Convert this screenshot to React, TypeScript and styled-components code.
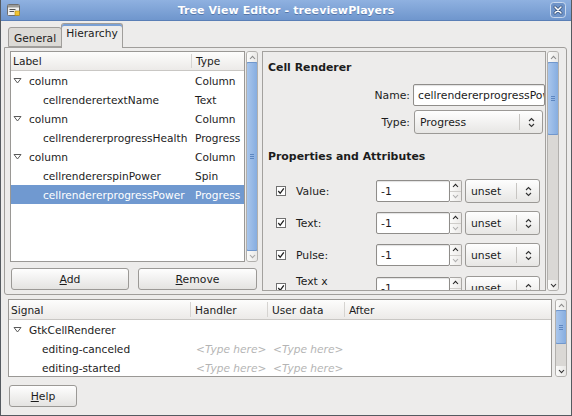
import React from 'react';
import styled, { createGlobalStyle } from 'styled-components';

const GlobalStyle = createGlobalStyle`
	html, body {
		margin: 0;
		padding: 0;
		background: #edeceb;
	}
	body {
		font-family: "DejaVu Sans", "Liberation Sans", sans-serif;
		font-size: 10.6px;
		color: #1c1c1c;
	}
	* {
		box-sizing: border-box;
	}
`;

const Window = styled.div`
	width: 572px;
	height: 416px;
	display: flex;
	flex-direction: column;
	background: #edeceb;
	border: 1px solid #555a60;
	border-top: none;
	overflow: hidden;
`;

const TitleBar = styled.div`
	height: 21px;
	flex: none;
	display: grid;
	grid-template-columns: 24px 1fr 24px;
	align-items: center;
	background: linear-gradient(#8fb1e0, #6f96cd);
	border-bottom: 1px solid #5a7fb6;
	margin: 0 -1px;
`;

const TitleIcon = styled.span`
	display: flex;
	justify-content: center;
	padding-left: 2px;
`;

const Title = styled.div`
	text-align: center;
	font-weight: bold;
	font-size: 11px;
	color: #fff;
	text-shadow: 0 1px 0 rgba(40, 70, 120, 0.45);
	letter-spacing: 0.1px;
`;

const CloseBox = styled.span`
	display: flex;
	justify-content: flex-start;
	padding-left: 2px;
`;

const Body = styled.div`
	flex: 1;
	display: flex;
	flex-direction: column;
	padding: 0 4px 8px 3px;
`;

const TabsRow = styled.div`
	height: 26px;
	display: flex;
	align-items: flex-end;
	padding-left: 4px;
	position: relative;
	z-index: 1;
`;

const Tab = styled.div<{ $active?: boolean }>`
	height: ${({ $active }) => ($active ? '25px' : '20px')};
	margin-bottom: ${({ $active }) => ($active ? '-1px' : '0')};
	margin-left: ${({ $active }) => ($active ? '-1px' : '0')};
	padding: ${({ $active }) => ($active ? '3px 4px 0 4px' : '4px 5px 0 5px')};
	border: 1px solid #a09e9b;
	border-bottom: ${({ $active }) => ($active ? 'none' : '1px solid #a09e9b')};
	border-radius: 3px 3px 0 0;
	background: ${({ $active }) => ($active ? '#edeceb' : '#dcdad6')};
	box-shadow: ${({ $active }) => ($active ? 'inset 0 2px 0 #7aa0d4' : 'none')};
	color: #1c1c1c;
	font-size: 10.7px;
	line-height: 14px;
`;

const Panel = styled.div`
	height: 248px;
	flex: none;
	border: 1px solid #a09e9b;
	border-radius: 0 3px 3px 3px;
	padding: 3px 4px 3px 5px;
	display: flex;
	gap: 4px;
`;

const LeftColumn = styled.div`
	width: 248px;
	display: flex;
	flex-direction: column;
	gap: 6px;
`;

const ScrolledArea = styled.div<{ $height: number; $gap?: number }>`
	height: ${({ $height }) => $height}px;
	display: flex;
	gap: ${({ $gap }) => $gap ?? 1}px;
	flex: none;
`;

const TreeBox = styled.div`
	flex: 1;
	background: #fff;
	border: 1px solid #9a9895;
	overflow: hidden;
`;

const TreeHeader = styled.div<{ $cols: string; $h: number }>`
	display: grid;
	grid-template-columns: ${({ $cols }) => $cols};
	height: ${({ $h }) => $h}px;
	background: linear-gradient(#fdfdfc, #eceae8);
	border-bottom: 1px solid #c9c7c4;
`;

const HeaderCell = styled.div<{ $first?: boolean }>`
	display: flex;
	align-items: center;
	padding-left: ${({ $first }) => ($first ? '2px' : '4px')};
	border-left: ${({ $first }) => ($first ? 'none' : '1px solid #d6d4d1')};
	margin: 2px 0;
	color: #1c1c1c;
	white-space: nowrap;
`;

const TreeRow = styled.div<{ $cols: string; $selected?: boolean }>`
	display: grid;
	grid-template-columns: ${({ $cols }) => $cols};
	height: 19px;
	align-items: center;
	background: ${({ $selected }) => ($selected ? '#7099d0' : 'transparent')};
	color: ${({ $selected }) => ($selected ? '#fff' : '#1c1c1c')};
	white-space: nowrap;
`;

const RowLabel = styled.div<{ $indent: number }>`
	display: flex;
	align-items: center;
	gap: 7px;
	padding-left: ${({ $indent }) => $indent}px;
	overflow: hidden;
`;

const RowCell = styled.div<{ $pad?: number }>`
	padding-left: ${({ $pad }) => $pad ?? 4}px;
	overflow: hidden;
`;

const Placeholder = styled(RowCell)`
	color: #b4b4b4;
	font-style: italic;
`;

const ScrollBar = styled.div`
	width: 12px;
	flex: none;
	display: flex;
	flex-direction: column;
	border: 1px solid #b2b0ad;
	border-radius: 3px;
	background: #dad8d5;
	overflow: hidden;
`;

const ScrollArrow = styled.div`
	height: 10px;
	flex: none;
	display: flex;
	align-items: center;
	justify-content: center;
	background: linear-gradient(90deg, #fbfbfa, #e9e8e6);
`;

const Trough = styled.div`
	flex: 1;
	display: flex;
	flex-direction: column;
`;

const Thumb = styled.div<{ $height?: number }>`
	flex: ${({ $height }) => ($height ? 'none' : '1')};
	height: ${({ $height }) => ($height ? `${$height}px` : 'auto')};
	background: linear-gradient(90deg, #a9c6ec, #86ade0);
	border: 1px solid #7097cd;
	border-radius: 2px;
	margin: 0 -1px;
	display: flex;
	align-items: center;
	justify-content: center;
`;

const Grip = styled.span`
	width: 4px;
	height: 5px;
	border-top: 1px solid #5d86c0;
	border-bottom: 1px solid #5d86c0;
	position: relative;
	&::after {
		content: '';
		position: absolute;
		left: 0;
		right: 0;
		top: 1px;
		border-top: 1px solid #5d86c0;
	}
`;

const ButtonRow = styled.div`
	display: grid;
	grid-template-columns: 118px 119px;
	gap: 9px;
	padding-left: 1px;
`;

const PushButton = styled.button<{ $width?: number }>`
	height: 22px;
	width: ${({ $width }) => ($width ? `${$width}px` : 'auto')};
	border: 1px solid #9b9996;
	border-radius: 3px;
	background: linear-gradient(#fefefe, #e4e3e1);
	font-family: inherit;
	font-size: 10.8px;
	color: #1c1c1c;
	padding: 0;
`;

const RightFrame = styled.div`
	flex: 1;
	border: 1px solid #a3a19e;
	overflow: hidden;
	padding: 9px 0 0 5px;
	display: flex;
	flex-direction: column;
`;

const Heading = styled.div<{ $top?: number }>`
	font-weight: bold;
	font-size: 10.9px;
	line-height: 14px;
	margin-top: ${({ $top }) => $top ?? 0}px;
	white-space: nowrap;
`;

const FieldGrid = styled.div`
	display: grid;
	grid-template-columns: 142px 132px;
	column-gap: 3px;
	row-gap: 4px;
	margin-top: 9px;
	align-items: center;
`;

const FieldLabel = styled.div`
	text-align: right;
	font-size: 10.8px;
`;

const TextEntry = styled.div<{ $width?: number }>`
	height: 22px;
	width: ${({ $width }) => ($width ? `${$width}px` : 'auto')};
	background: #fff;
	border: 1px solid #8f8d8a;
	border-radius: 2px;
	box-shadow: inset 0 1px 1px rgba(0, 0, 0, 0.12);
	padding: 0 4px;
	display: flex;
	align-items: center;
	white-space: nowrap;
	overflow: hidden;
	font-size: 10.8px;
`;

const Combo = styled.div<{ $width: number; $indent?: number }>`
	height: 24px;
	width: ${({ $width }) => $width}px;
	margin-left: ${({ $indent }) => $indent ?? 0}px;
	border: 1px solid #9b9996;
	border-radius: 3px;
	background: linear-gradient(#fefefe, #e7e6e4);
	display: flex;
	align-items: center;
	font-size: 10.8px;
`;

const ComboText = styled.span`
	flex: 1;
	padding-left: 5px;
`;

const ComboArrow = styled.span`
	width: 23px;
	height: 16px;
	border-left: 1px solid #c7c5c2;
	display: flex;
	align-items: center;
	justify-content: center;
`;

const PropList = styled.div`
	display: flex;
	flex-direction: column;
	gap: 8px;
	margin-top: 15px;
`;

const PropRow = styled.div`
	display: grid;
	grid-template-columns: 10px 90px 86px 78px;
	height: 24px;
	align-items: center;
	padding-left: 8px;
	& > :nth-child(2) {
		padding-left: 10px;
	}
	& > :nth-child(4) {
		margin-left: 3px;
	}
`;

const PropLabel = styled.div`
	font-size: 10.8px;
	line-height: 13px;
	width: 82px;
`;

const SpinBox = styled.div`
	display: flex;
	height: 22px;
`;

const SpinArrows = styled.div`
	width: 12px;
	display: flex;
	flex-direction: column;
	border: 1px solid #a9a7a4;
	border-left: none;
	border-radius: 0 2px 2px 0;
	background: linear-gradient(90deg, #fbfbfa, #eceae8);
`;

const SpinHalf = styled.div<{ $top?: boolean }>`
	flex: 1;
	display: flex;
	align-items: center;
	justify-content: center;
	border-bottom: ${({ $top }) => ($top ? '1px solid #cfcdca' : 'none')};
`;

const SignalPane = styled.div`
	margin-top: 4px;
	padding-left: 4px;
`;

const HelpRow = styled.div`
	margin-top: 8px;
	padding-left: 5px;
`;

const Expander = () => (
	<svg width="9" height="9" viewBox="0 0 9 9">
		<path d="M1 2.5 H8 L4.5 7 Z" fill="#fff" stroke="#5a5a5a" strokeWidth="1" strokeLinejoin="round" />
	</svg>
);

const CheckBox = () => (
	<svg width="10" height="10" viewBox="0 0 10 10">
		<rect x="0.5" y="0.5" width="9" height="9" fill="#fff" stroke="#707070" />
		<path d="M2.3 5 L4.2 7.3 L7.8 2.4" fill="none" stroke="#1e1e1e" strokeWidth="1.3" />
	</svg>
);

const UpDownIcon = () => (
	<svg width="7" height="11" viewBox="0 0 7 11">
		<path d="M1 4 L3.5 1.5 L6 4 M1 7 L3.5 9.5 L6 7" fill="none" stroke="#333" strokeWidth="1.1" />
	</svg>
);

const Chevron = ({ up, color }: { up?: boolean; color: string }) => (
	<svg width="7" height="5" viewBox="0 0 7 5">
		<path d={up ? 'M1 4 L3.5 1.3 L6 4' : 'M1 1 L3.5 3.7 L6 1'} fill="none" stroke={color} strokeWidth="1.1" />
	</svg>
);

const WindowIcon = () => (
	<svg width="13" height="12" viewBox="0 0 13 12">
		<rect x="0.5" y="0.5" width="12" height="11" rx="1" fill="#f0f0ee" stroke="#6e6e6e" />
		<rect x="1" y="1" width="11" height="2.5" fill="#9a9a98" />
		<path d="M2.5 5.5 H8.5 M2.5 7.5 H7" stroke="#555" strokeWidth="1" />
		<rect x="8" y="7" width="4.5" height="4.5" fill="#f2c530" stroke="#b08a10" strokeWidth="0.6" />
	</svg>
);

const CloseIcon = () => (
	<svg width="16" height="16" viewBox="0 0 16 16">
		<rect x="0.5" y="0.5" width="15" height="15" rx="3" fill="#6f94c9" stroke="#e4ecf7" strokeOpacity="0.75" />
		<path d="M5 5 L11 11 M11 5 L5 11" stroke="#34507a" strokeWidth="3" strokeLinecap="round" />
		<path d="M5 5 L11 11 M11 5 L5 11" stroke="#fff" strokeWidth="1.5" strokeLinecap="round" />
	</svg>
);

const VScroll = ({ thumb }: { thumb?: number }) => (
	<ScrollBar>
		<ScrollArrow>
			<Chevron up color="#8a8a8a" />
		</ScrollArrow>
		<Trough>
			<Thumb $height={thumb}>
				<Grip />
			</Thumb>
		</Trough>
		<ScrollArrow>
			<Chevron color={thumb ? '#333' : '#a8a8a8'} />
		</ScrollArrow>
	</ScrollBar>
);

const hierarchy = [
	{ label: 'column', type: 'Column', parent: true },
	{ label: 'cellrenderertextName', type: 'Text' },
	{ label: 'column', type: 'Column', parent: true },
	{ label: 'cellrendererprogressHealth', type: 'Progress' },
	{ label: 'column', type: 'Column', parent: true },
	{ label: 'cellrendererspinPower', type: 'Spin' },
	{ label: 'cellrendererprogressPower', type: 'Progress', selected: true },
];

const properties = ['Value:', 'Text:', 'Pulse:', 'Text x alignment:'];

const treeCols = '180px 1fr';
const signalCols = '181px 77px 77px 1fr';

export default function App() {
	return (
		<>
			<GlobalStyle />
			<Window>
				<TitleBar>
					<TitleIcon>
						<WindowIcon />
					</TitleIcon>
					<Title>Tree View Editor - treeviewPlayers</Title>
					<CloseBox>
						<CloseIcon />
					</CloseBox>
				</TitleBar>

				<Body>
					<TabsRow>
						<Tab>General</Tab>
						<Tab $active>Hierarchy</Tab>
					</TabsRow>

					<Panel>
						<LeftColumn>
							<ScrolledArea $height={211}>
								<TreeBox>
									<TreeHeader $cols={treeCols} $h={19}>
										<HeaderCell $first>Label</HeaderCell>
										<HeaderCell>Type</HeaderCell>
									</TreeHeader>
									{hierarchy.map((row, i) => (
										<TreeRow key={i} $cols={treeCols} $selected={row.selected}>
											<RowLabel $indent={row.parent ? 2 : 32}>
												{row.parent && <Expander />}
												{row.label}
											</RowLabel>
											<RowCell>{row.type}</RowCell>
										</TreeRow>
									))}
								</TreeBox>
								<VScroll />
							</ScrolledArea>
							<ButtonRow>
								<PushButton>
									<u>A</u>dd
								</PushButton>
								<PushButton>
									<u>R</u>emove
								</PushButton>
							</ButtonRow>
						</LeftColumn>

						<ScrolledArea $height={240}>
							<RightFrame>
								<Heading>Cell Renderer</Heading>
								<FieldGrid>
									<FieldLabel>Name:</FieldLabel>
									<TextEntry>cellrendererprogressPower</TextEntry>
									<FieldLabel>Type:</FieldLabel>
									<Combo $width={129} $indent={1}>
										<ComboText>Progress</ComboText>
										<ComboArrow>
											<UpDownIcon />
										</ComboArrow>
									</Combo>
								</FieldGrid>
								<Heading $top={16}>Properties and Attributes</Heading>
								<PropList>
									{properties.map((name) => (
										<PropRow key={name}>
											<CheckBox />
											<PropLabel>{name}</PropLabel>
											<SpinBox>
												<TextEntry $width={74}>-1</TextEntry>
												<SpinArrows>
													<SpinHalf $top>
														<Chevron up color="#222" />
													</SpinHalf>
													<SpinHalf>
														<Chevron color="#b0b0b0" />
													</SpinHalf>
												</SpinArrows>
											</SpinBox>
											<Combo $width={75}>
												<ComboText>unset</ComboText>
												<ComboArrow>
													<UpDownIcon />
												</ComboArrow>
											</Combo>
										</PropRow>
									))}
								</PropList>
							</RightFrame>
							<VScroll thumb={73} />
						</ScrolledArea>
					</Panel>

					<SignalPane>
						<ScrolledArea $height={78} $gap={3}>
							<TreeBox>
								<TreeHeader $cols={signalCols} $h={20}>
									<HeaderCell $first>Signal</HeaderCell>
									<HeaderCell>Handler</HeaderCell>
									<HeaderCell>User data</HeaderCell>
									<HeaderCell>After</HeaderCell>
								</TreeHeader>
								<TreeRow $cols={signalCols}>
									<RowLabel $indent={4}>
										<Expander />
										GtkCellRenderer
									</RowLabel>
								</TreeRow>
								{['editing-canceled', 'editing-started'].map((sig) => (
									<TreeRow key={sig} $cols={signalCols}>
										<RowLabel $indent={33}>{sig}</RowLabel>
										<Placeholder $pad={6}>&lt;Type here&gt;</Placeholder>
										<Placeholder $pad={6}>&lt;Type here&gt;</Placeholder>
										<RowCell />
									</TreeRow>
								))}
							</TreeBox>
							<VScroll thumb={34} />
						</ScrolledArea>
					</SignalPane>

					<HelpRow>
						<PushButton $width={68}>
							<u>H</u>elp
						</PushButton>
					</HelpRow>
				</Body>
			</Window>
		</>
	);
}
